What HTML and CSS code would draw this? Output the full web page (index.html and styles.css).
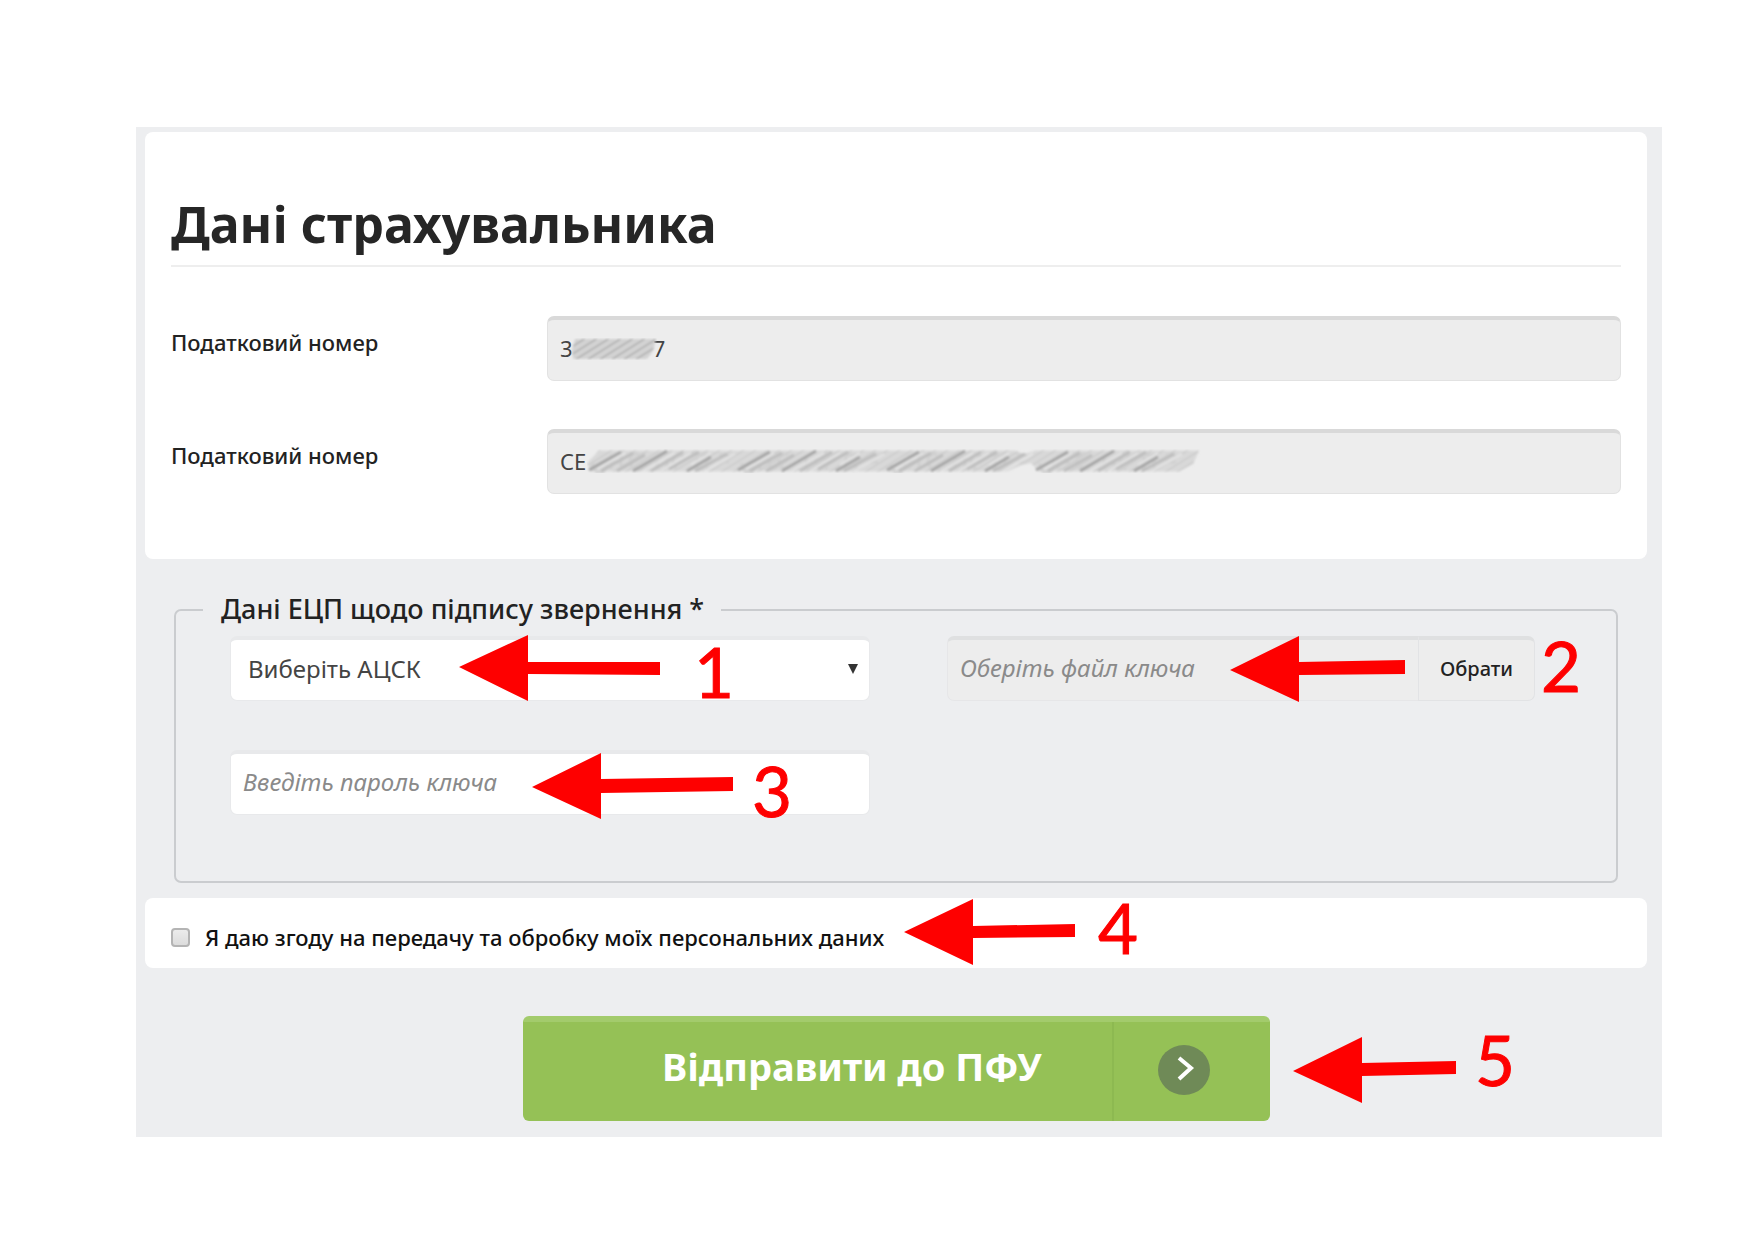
FILE: index.html
```
<!DOCTYPE html>
<html lang="uk">
<head>
<meta charset="utf-8">
<meta name="viewport" content="width=device-width, initial-scale=1">
<title>Дані страхувальника</title>
<link rel="stylesheet" href="styles.css">
</head>
<body>
<main class="page">
  <form class="panel">
    <section class="card insurer">
      <h1 class="title">Дані страхувальника</h1>
      <div class="row">
        <label class="label" for="tax-number">Податковий номер</label>
        <div class="control">
          <input class="input" id="tax-number" type="text" readonly value="3&nbsp;&nbsp;&nbsp;&nbsp;&nbsp;&nbsp;&nbsp;&nbsp;&nbsp;&nbsp;&nbsp;&nbsp;&nbsp;&nbsp;7">
          <svg class="scribble scribble-short" width="86" height="22" viewBox="0 0 86 22" aria-hidden="true">
            <defs>
              <filter id="soft" x="-5%" y="-20%" width="110%" height="140%"><feGaussianBlur stdDeviation="0.9"/></filter>
              <pattern id="hatch" width="12" height="22" patternUnits="userSpaceOnUse" patternTransform="skewX(-58)">
                <rect width="12" height="22" fill="#dadada"/>
                <rect x="1" width="4" height="22" fill="#b2b2b2"/>
                <rect x="8" width="2" height="22" fill="#c8c8c8"/>
              </pattern>
              <pattern id="strokes" width="149" height="24" patternUnits="userSpaceOnUse">
                <g fill="none" stroke-width="3">
                  <path stroke="#d0d0d0" d="M6 14a7 8 0 1 0 12-4M24 20V6M34 20V6M24 13H34M52 6a6 7 0 1 0 0 12M70 20V8M80 20V8M92 20a6 7 0 1 1 6-8M110 20V6H120V20M132 6H142M132 13H142"/>
                  <path stroke="#bdbdbd" d="M14 22 46 4M30 22 58 6M64 22 96 3M82 20 112 3M108 22 140 5"/>
                  <path stroke="#a4a4a4" d="M2 21 34 3M46 22 80 2M100 22 124 8"/>
                  <path stroke="#e6e6e6" stroke-width="2" d="M10 20 38 4M56 22 88 4M74 22 104 4M104 16 124 4M118 22 148 5"/>
                </g>
              </pattern>
            </defs>
            <path fill="url(#hatch)" filter="url(#soft)" d="M4 1H85L82 13 76 21H2L1 12Z"/>
          </svg>
        </div>
      </div>
      <div class="row">
        <label class="label" for="tax-name">Податковий номер</label>
        <div class="control">
          <input class="input" id="tax-name" type="text" readonly value="СЕ">
          <svg class="scribble scribble-long" width="614" height="24" viewBox="0 0 614 24" aria-hidden="true">
            <g filter="url(#soft)">
              <path fill="#dcdcdc" d="M12 2H428L438 6 448 2H612L606 15 592 22H452L444 14 434 16 420 22H4L0 14Z"/>
              <path fill="url(#hatch)" opacity=".35" d="M12 1H428L438 5 448 1H612L606 15 592 23H452L444 14 434 16 420 23H4L0 14Z"/>
              <path fill="url(#strokes)" d="M6 0H612L592 24H0Z"/>
            </g>
          </svg>
        </div>
      </div>
    </section>

    <fieldset class="signature">
      <legend class="legend">Дані ЕЦП щодо підпису звернення *</legend>
      <div class="fields">
        <div class="control">
          <select class="input editable select" aria-label="Виберіть АЦСК"><option>Виберіть АЦСК</option></select>
          <svg class="caret" width="10" height="10" viewBox="0 0 10 10" aria-hidden="true"><path fill="#333" d="M0 0h10L5 10z"/></svg>
          <svg class="note note-1" width="280" height="66" viewBox="0 0 280 66"><path d="M0 32 69 0V27L201 27V40L69 39V66Z"/><text x="235" y="63">1</text></svg>
        </div>
        <div class="control file">
          <input class="input file-name" type="text" readonly placeholder="Оберіть файл ключа" aria-label="Оберіть файл ключа">
          <button class="file-button" type="button">Обрати</button>
          <svg class="note note-2" width="350" height="66" viewBox="0 0 350 66"><path d="M0 34 69 0V26L175 24V38L69 39V66Z"/><text x="311" y="56">2</text></svg>
        </div>
        <div class="control">
          <input class="input editable" type="password" placeholder="Введіть пароль ключа" aria-label="Введіть пароль ключа">
          <svg class="note note-3" width="260" height="66" viewBox="0 0 260 66"><path d="M0 34 69 0V26L201 24V38L69 40V66Z"/><text x="220" y="64">3</text></svg>
        </div>
      </div>
    </fieldset>

    <div class="card consent">
      <input class="checkbox" id="consent" type="checkbox">
      <label class="consent-label" for="consent">Я даю згоду на передачу та обробку моїх персональних даних</label>
      <svg class="note note-4" width="240" height="66" viewBox="0 0 240 66"><path d="M0 33 69 0V27L171 25V38L69 39V66Z"/><text x="194" y="55">4</text></svg>
    </div>

    <div class="actions">
      <button class="submit" type="submit">
        <span class="submit-text">Відправити до ПФУ</span>
        <span class="submit-icon">
          <svg width="53" height="50" viewBox="0 0 53 50" aria-hidden="true"><ellipse cx="26" cy="25" rx="26" ry="25" fill="#6f8a57"/><path d="M21 13 33 23 21 34" fill="none" stroke="#fff" stroke-width="4"/></svg>
        </span>
      </button>
      <svg class="note note-5" width="230" height="66" viewBox="0 0 230 66"><path d="M0 34 69 0V26L163 24V37L69 39V66Z"/><text x="182" y="49">5</text></svg>
    </div>
  </form>
</main>
</body>
</html>
```
FILE: styles.css
```
* { box-sizing: border-box; }

body {
  margin: 0;
  background: #fff;
  color: #222;
  font: 500 22px/32px "Noto Sans", "Open Sans", sans-serif;
}

.page { padding: 127px 92px 104px 136px; }

.panel {
  padding: 5px 15px 16px 9px;
  background: #edeef0;
}

.card {
  border-radius: 8px;
  background: #fff;
}

/* Insurer data */
.insurer { padding: 58px 26px 65px; }

.title {
  margin: 0;
  padding-bottom: 7px;
  border-bottom: 2px solid #eee;
  color: #262626;
  font-size: 50px;
  font-weight: 700;
  line-height: 68px;
}

.row {
  display: grid;
  grid-template-columns: 376px 1fr;
  margin-top: 49px;
}

.label { padding-top: 10px; }

.control {
  position: relative;
  display: flex;
}

.input {
  flex: 1;
  min-width: 0;
  height: 65px;
  margin: 0;
  padding: 0 12px 4px;
  border: 1px solid #e2e2e2;
  border-top: 4px solid #d9d9d9;
  border-radius: 7px;
  background: #ededed;
  color: #444;
  font: 400 22px/32px "Noto Sans", "Open Sans", sans-serif;
}

.input::placeholder {
  color: #8a8a8a;
  font-size: 24px;
  font-style: italic;
  opacity: 1;
}

.row + .row { margin-top: 48px; }

.scribble { position: absolute; }
.scribble-short { left: 24px; top: 22px; }
.scribble-long { left: 40px; top: 20px; }

/* Signature */
.signature {
  min-width: 0;
  margin: 34px 29px 0;
  padding: 8px 27px 66px;
  border: 2px solid #cacccf;
  border-radius: 7px;
}

.legend {
  padding: 0 17px 2px 18px;
  font-size: 27px;
}

.fields {
  display: grid;
  grid-template-columns: 640fr 588fr;
  gap: 49px 77px;
  padding: 1px 54px 0 27px;
}

.editable {
  border-color: #e8e9eb;
  background: #fff;
}

.select {
  padding: 0 17px 2px;
  appearance: none;
  font-size: 24px;
}

.caret {
  position: absolute;
  right: 12px;
  top: 28px;
}

.file-name {
  border-color: #e6e6e8;
  border-top-color: #dfe0e1;
  border-right: 0;
  border-radius: 7px 0 0 7px;
}

.file-button {
  width: 117px;
  height: 65px;
  padding: 0 0 2px;
  border: 1px solid #e2e3e5;
  border-top: 4px solid #dfe0e1;
  border-radius: 0 7px 7px 0;
  background: #ededed;
  color: #222;
  font: 500 20px/32px "Noto Sans", "Open Sans", sans-serif;
}

/* Consent */
.consent {
  position: relative;
  display: flex;
  align-items: center;
  gap: 15px;
  margin-top: 15px;
  padding: 23px 26px 15px;
}

.checkbox {
  width: 19px;
  height: 19px;
  margin: 0;
  appearance: none;
  border: 2px solid #b4b4b4;
  border-radius: 4px;
  background: linear-gradient(#ececec, #dcdcdc);
}

.consent-label { color: #111; }

/* Submit */
.actions {
  position: relative;
  display: flex;
  width: 747px;
  margin: 48px auto 0;
}

.submit {
  display: flex;
  flex: 1;
  height: 105px;
  padding: 0;
  border: 0;
  border-top: 6px solid #a3cb6c;
  border-radius: 6px;
  background: #95c156;
  color: #fff;
  font: 700 38px/48px "Noto Sans", "Open Sans", sans-serif;
}

.submit-text {
  flex: 1;
  align-self: center;
  padding: 0 0 12px 70px;
}

.submit-icon {
  display: flex;
  align-items: center;
  justify-content: center;
  align-self: stretch;
  width: 158px;
  padding: 0 14px 3px 0;
  border-left: 2px solid #8db951;
}

/* Numbered pointers over the form */
.note {
  position: absolute;
  overflow: visible;
  fill: #fe0000;
  font: 400 69px "Lato", sans-serif;
  pointer-events: none;
}

.note text {
  stroke: #fe0000;
  stroke-width: 1px;
}

.note-1 { left: 229px; top: -1px; }
.note-2 { left: 283px; top: 0; }
.note-3 { left: 302px; top: 3px; }
.note-4 { left: 759px; top: 1px; }
.note-5 { left: 770px; top: 21px; }
```
